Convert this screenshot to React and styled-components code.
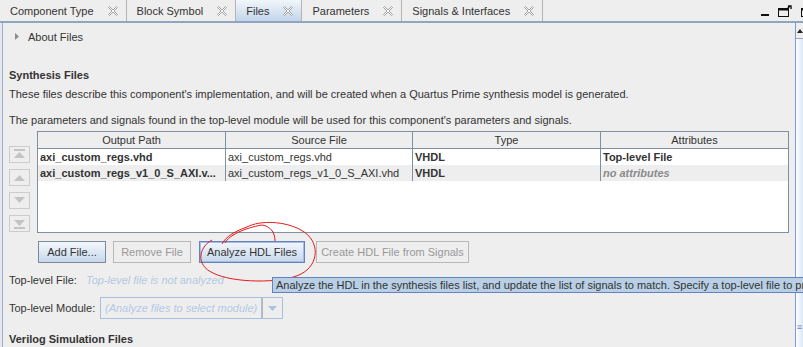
import React from "react";
import styled, { createGlobalStyle, css } from "styled-components";

const GlobalStyle = createGlobalStyle`
  html, body {
    margin: 0;
    padding: 0;
    background: #eeeeee;
  }
  body {
    font-family: "Liberation Sans", Arial, sans-serif;
    font-size: 11px;
    color: #333333;
  }
`;

const Page = styled.div`
  position: relative;
  width: 803px;
  height: 347px;
  overflow: hidden;
  background: #eeeeee;
`;

const TabBar = styled.div`
  display: flex;
  align-items: stretch;
  height: 21px;
  border-bottom: 2px solid #8fa5c1;
`;

const Tab = styled.div`
  display: flex;
  align-items: center;
  gap: 14px;
  padding: 0 8px 0 10px;
  border-right: 1px solid #b4b4b4;
  color: #333333;
  white-space: nowrap;
  ${(p) =>
    p.$active &&
    css`
      background: linear-gradient(#f2f6fb, #c3d5ea);
    `}
`;

const TabSpacer = styled.div`
  flex: 1;
`;

const WindowControls = styled.div`
  display: flex;
  align-items: flex-end;
  gap: 8px;
  padding-bottom: 4px;
  margin-right: -8px;
`;

const Body = styled.div`
  display: flex;
  height: 324px;
`;

const LeftEdge = styled.div`
  width: 2px;
  border-right: 1px solid #9db0c8;
  background: #e4e8ee;
`;

const Content = styled.div`
  flex: 1;
  padding-left: 6px;
  display: flex;
  flex-direction: column;
`;

const Scrollbar = styled.div`
  width: 7px;
  display: flex;
  flex-direction: column;
  border-left: 1px solid #7b9bd2;
  background: #eeeeee;
`;

const ScrollArrow = styled.div`
  height: 15px;
  display: flex;
  align-items: center;
  justify-content: flex-end;
  border-bottom: 1px solid #9aa9bb;
`;

const ScrollThumb = styled.div`
  flex: 1;
  background: linear-gradient(90deg, #ffffff, #dbe6f4);
  display: flex;
  align-items: flex-end;
  justify-content: center;
  padding-bottom: 17px;
  color: #6382bf;
  font-size: 9px;
  line-height: 6px;
`;

const AboutRow = styled.div`
  display: flex;
  align-items: center;
  gap: 9px;
  height: 16px;
  margin-top: 6px;
  padding-left: 6px;
  color: #333333;
`;

const Heading = styled.div`
  font-weight: bold;
  font-size: 11px;
  line-height: 16px;
  margin-top: ${(p) => p.$top}px;
  color: #333333;
`;

const Line = styled.div`
  line-height: 16px;
  margin-top: ${(p) => p.$top}px;
  white-space: nowrap;
`;

const TableArea = styled.div`
  display: flex;
  margin-top: 3px;
  gap: 7px;
`;

const MoveColumn = styled.div`
  display: flex;
  flex-direction: column;
  gap: 6px;
  padding-top: 15px;
  width: 21px;
`;

const MoveButton = styled.div`
  width: 19px;
  height: 15px;
  border: 1px solid #cccccc;
  display: flex;
  align-items: center;
  justify-content: center;
`;

const Table = styled.div`
  width: 750px;
  height: 100px;
  border: 1px solid #7f8fa3;
  background: #ffffff;
  display: flex;
  flex-direction: column;
`;

const HeaderRow = styled.div`
  display: grid;
  grid-template-columns: 188px 187px 188px 187px;
  height: 16px;
  background: #eeeeee;
  border-bottom: 1px solid #7f8fa3;
`;

const HeaderCell = styled.div`
  text-align: center;
  line-height: 16px;
  border-right: 1px solid #7f8fa3;
  &:last-child {
    border-right: none;
  }
`;

const Row = styled.div`
  display: grid;
  grid-template-columns: 188px 187px 188px 187px;
  height: 16px;
  background: ${(p) => (p.$alt ? "#eeeeee" : "#ffffff")};
`;

const Cell = styled.div`
  line-height: 16px;
  padding-left: 2px;
  border-right: 1px solid #7f8fa3;
  white-space: nowrap;
  overflow: hidden;
  color: ${(p) => (p.$muted ? "#8a8a8a" : "#333333")};
  font-weight: ${(p) => (p.$bold ? "bold" : "normal")};
  font-style: ${(p) => (p.$italic ? "italic" : "normal")};
  &:last-child {
    border-right: none;
  }
`;

const ButtonRow = styled.div`
  display: flex;
  margin-top: 8px;
  padding-left: 29px;
`;

const Button = styled.div`
  box-sizing: border-box;
  height: 22px;
  width: ${(p) => p.$w}px;
  margin-right: ${(p) => p.$gap || 0}px;
  display: flex;
  align-items: center;
  justify-content: center;
  white-space: nowrap;
  ${(p) =>
    p.$disabled
      ? css`
          border: 1px solid #b8b8b8;
          color: #999999;
          background: #eeeeee;
        `
      : css`
          border: 1px solid #7a8a99;
          color: #333333;
          background: linear-gradient(#f3f7fc, #c6d8ec);
        `}
  ${(p) =>
    p.$focus &&
    css`
      box-shadow: inset 0 0 0 1px #a3bde3;
      border-color: #6382bf;
    `}
`;

const FieldRow = styled.div`
  display: flex;
  align-items: center;
  margin-top: ${(p) => p.$top}px;
  height: ${(p) => p.$h || 16}px;
`;

const FieldLabel = styled.div`
  width: ${(p) => p.$w}px;
  white-space: nowrap;
`;

const Placeholder = styled.div`
  font-style: italic;
  color: #b3c9e3;
  white-space: nowrap;
`;

const Combo = styled.div`
  box-sizing: border-box;
  display: flex;
  height: 22px;
  width: 183px;
  border: 1px solid #a9bedb;
`;

const ComboText = styled.div`
  flex: 1;
  display: flex;
  align-items: center;
  padding-left: 4px;
  font-style: italic;
  color: #b3c9e3;
  border-right: 1px solid #a9bedb;
  white-space: nowrap;
`;

const ComboArrow = styled.div`
  width: 19px;
  display: flex;
  align-items: center;
  justify-content: center;
  border-left: 1px solid #b8b8b8;
`;

const Tooltip = styled.div`
  position: absolute;
  left: 272px;
  top: 277px;
  width: 540px;
  height: 14px;
  line-height: 14px;
  padding-left: 3px;
  background: #b8cfe5;
  border: 1px solid #6382bf;
  color: #333333;
  white-space: nowrap;
  overflow: hidden;
  z-index: 3;
`;

const Annotation = styled.svg`
  position: absolute;
  left: 0;
  top: 0;
  width: 803px;
  height: 347px;
  pointer-events: none;
  z-index: 2;
`;

const CloseIcon = () => (
  <svg width="10" height="10" viewBox="0 0 10 10">
    <polygon
      points="0.5,1.5 1.5,0.5 5,4 8.5,0.5 9.5,1.5 6,5 9.5,8.5 8.5,9.5 5,6 1.5,9.5 0.5,8.5 4,5"
      fill="#ffffff"
      stroke="#8a8a8a"
      strokeWidth="0.8"
      strokeLinejoin="round"
    />
  </svg>
);

const tabs = [
  { name: "Component Type" },
  { name: "Block Symbol" },
  { name: "Files", active: true },
  { name: "Parameters" },
  { name: "Signals & Interfaces" },
];

const rows = [
  {
    out: "axi_custom_regs.vhd",
    src: "axi_custom_regs.vhd",
    type: "VHDL",
    attr: "Top-level File",
  },
  {
    out: "axi_custom_regs_v1_0_S_AXI.v...",
    src: "axi_custom_regs_v1_0_S_AXI.vhd",
    type: "VHDL",
    attr: "no attributes",
    muted: true,
  },
];

const MoveIcon = ({ dir, bar }) => (
  <svg width="13" height="11" viewBox="0 0 13 11">
    {dir === "up" ? (
      <polygon points="1,9 12,9 6.5,3" fill="#c4c4c4" />
    ) : (
      <polygon points="1,2 12,2 6.5,8" fill="#c4c4c4" />
    )}
    {bar === "top" && <rect x="1" y="0" width="11" height="2" fill="#c4c4c4" />}
    {bar === "bottom" && <rect x="1" y="9" width="11" height="2" fill="#c4c4c4" />}
  </svg>
);

export default function App() {
  return (
    <Page>
      <GlobalStyle />
      <TabBar>
        {tabs.map((t) => (
          <Tab key={t.name} $active={t.active}>
            <span>{t.name}</span>
            <CloseIcon />
          </Tab>
        ))}
        <TabSpacer />
        <WindowControls>
          <svg width="9" height="4" viewBox="0 0 9 4">
            <rect x="0" y="1" width="8" height="2" fill="#111" />
          </svg>
          <svg width="15" height="12" viewBox="0 0 15 12">
            <rect x="0.5" y="3.5" width="10" height="8" fill="none" stroke="#111" />
            <rect x="0.5" y="3.5" width="10" height="2" fill="#111" />
            <path d="M8 5 L12 1 M10 1 H13 V4" stroke="#111" fill="none" strokeWidth="1.4" />
          </svg>
          <svg width="10" height="12" viewBox="0 0 10 12">
            <rect x="0.5" y="3.5" width="10" height="8" fill="none" stroke="#111" />
            <rect x="0.5" y="3.5" width="10" height="2" fill="#111" />
          </svg>
        </WindowControls>
      </TabBar>

      <Body>
        <LeftEdge />
        <Content>
          <AboutRow>
            <svg width="4" height="7" viewBox="0 0 4 7">
              <polygon points="0,0 4,3.5 0,7" fill="#8c8c8c" />
            </svg>
            <span>About Files</span>
          </AboutRow>

          <Heading $top={22}>Synthesis Files</Heading>
          <Line $top={3}>
            These files describe this component's implementation, and will be
            created when a Quartus Prime synthesis model is generated.
          </Line>
          <Line $top={10}>
            The parameters and signals found in the top-level module will be used
            for this component's parameters and signals.
          </Line>

          <TableArea>
            <MoveColumn>
              <MoveButton>
                <MoveIcon dir="up" bar="top" />
              </MoveButton>
              <MoveButton>
                <MoveIcon dir="up" />
              </MoveButton>
              <MoveButton>
                <MoveIcon dir="down" />
              </MoveButton>
              <MoveButton>
                <MoveIcon dir="down" bar="bottom" />
              </MoveButton>
            </MoveColumn>
            <Table>
              <HeaderRow>
                <HeaderCell>Output Path</HeaderCell>
                <HeaderCell>Source File</HeaderCell>
                <HeaderCell>Type</HeaderCell>
                <HeaderCell>Attributes</HeaderCell>
              </HeaderRow>
              {rows.map((r, i) => (
                <Row key={r.src} $alt={i % 2 === 1}>
                  <Cell $bold>{r.out}</Cell>
                  <Cell>{r.src}</Cell>
                  <Cell $bold>{r.type}</Cell>
                  <Cell $bold $italic={r.muted} $muted={r.muted}>
                    {r.attr}
                  </Cell>
                </Row>
              ))}
            </Table>
          </TableArea>

          <ButtonRow>
            <Button $w={68} $gap={7}>Add File...</Button>
            <Button $w={78} $gap={8} $disabled>Remove File</Button>
            <Button $w={106} $gap={11} $focus>Analyze HDL Files</Button>
            <Button $w={153} $disabled>Create HDL File from Signals</Button>
          </ButtonRow>

          <FieldRow $top={9}>
            <FieldLabel $w={77}>Top-level File:</FieldLabel>
            <Placeholder>Top-level file is not analyzed</Placeholder>
          </FieldRow>

          <FieldRow $top={9} $h={24}>
            <FieldLabel $w={91}>Top-level Module:</FieldLabel>
            <Combo>
              <ComboText>(Analyze files to select module)</ComboText>
              <ComboArrow>
                <svg width="9" height="5" viewBox="0 0 9 5">
                  <polygon points="0,0 9,0 4.5,5" fill="#a9c2e0" />
                </svg>
              </ComboArrow>
            </Combo>
          </FieldRow>

          <Heading $top={11}>Verilog Simulation Files</Heading>
        </Content>
        <Scrollbar>
          <ScrollArrow>
            <svg width="6" height="4" viewBox="0 0 6 4">
              <polygon points="0,4 6,4 3,0" fill="#222" />
            </svg>
          </ScrollArrow>
          <ScrollThumb>≡</ScrollThumb>
        </Scrollbar>
      </Body>

      <Tooltip>
        Analyze the HDL in the synthesis files list, and update the list of
        signals to match. Specify a top-level file to provide the module.
      </Tooltip>

      <Annotation viewBox="0 0 803 347">
        <path
          d="M212 240 C199 247 195 265 213 273 C232 283 282 284 301 274 C319 265 321 241 301 230 C285 221 260 220 247 227 C236 231 226 236 222 244"
          fill="none"
          stroke="#e31b1b"
          strokeWidth="1"
        />
        <path
          d="M225 243 C229 235 245 228 262 225 C270 226 275 232 275 241"
          fill="none"
          stroke="#e31b1b"
          strokeWidth="1"
        />
      </Annotation>
    </Page>
  );
}
